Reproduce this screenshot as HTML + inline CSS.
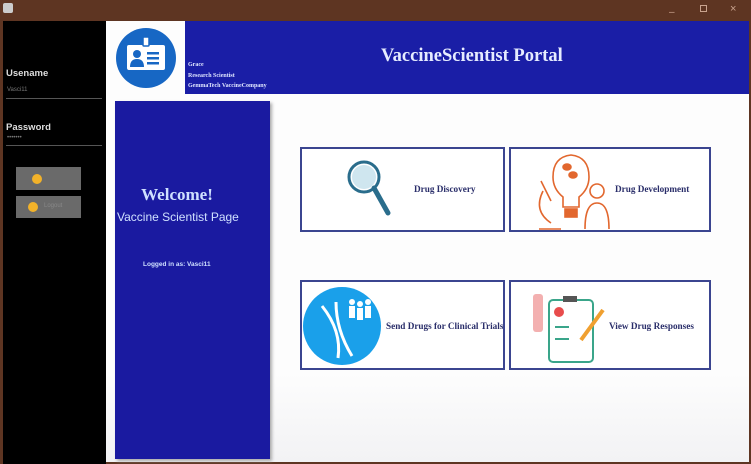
<!DOCTYPE html>
<html><head><meta charset="utf-8"><style>
*{margin:0;padding:0;box-sizing:border-box}
body{width:751px;height:464px;overflow:hidden;background:#5e3522;position:relative;font-family:"Liberation Sans",sans-serif}
.abs{position:absolute}
.serif{font-family:"Liberation Serif",serif;font-weight:bold}
.card{position:absolute;border:2px solid #3b4590;background:#fff;overflow:hidden}
.card span{position:absolute;font-family:"Liberation Serif",serif;font-weight:bold;font-size:9.2px;color:#2a2e6a;white-space:nowrap}
</style></head><body>
<div class="abs" style="left:3px;top:3px;width:10px;height:10px;background:#ccc;border-radius:2px"></div>
<div class="abs" style="left:669px;top:7px;color:#c9a38e;font-size:10px">–</div>
<div class="abs" style="left:700px;top:5px;width:7px;height:7px;border:1px solid #c9a38e"></div>
<div class="abs" style="left:730px;top:3px;color:#c9a38e;font-size:11px">×</div>
<div class="abs" style="left:3px;top:21px;width:103px;height:443px;background:#000"></div>
<div class="abs" style="left:6px;top:68px;color:#ddd;font-size:9.5px;font-weight:bold">Usename</div>
<div class="abs" style="left:7px;top:87px;color:#777;font-size:6px">Vasci11</div>
<div class="abs" style="left:6px;top:98px;width:96px;height:1px;background:#555"></div>
<div class="abs" style="left:6px;top:122px;color:#ddd;font-size:9.5px;font-weight:bold">Password</div>
<div class="abs" style="left:7px;top:135px;color:#777;font-size:6px">•••••••</div>
<div class="abs" style="left:6px;top:145px;width:96px;height:1px;background:#555"></div>
<div class="abs" style="left:16px;top:167px;width:65px;height:23px;background:#6a6a6a"></div>
<div class="abs" style="left:32px;top:174px;width:10px;height:10px;border-radius:50%;background:#f2b22a"></div>
<div class="abs" style="left:16px;top:196px;width:65px;height:22px;background:#6a6a6a"></div>
<div class="abs" style="left:28px;top:202px;width:10px;height:10px;border-radius:50%;background:#f2b22a"></div>
<div class="abs" style="left:44px;top:203px;color:#888;font-size:6px">Logout</div>
<div class="abs" style="left:106px;top:21px;width:643px;height:441px;background:linear-gradient(#fdfdfd 80%,#f2f2f4)"></div>
<div class="abs" style="left:185px;top:21px;width:564px;height:73px;background:#1a1ea6"></div>
<div class="abs serif" style="left:381px;top:46px;color:#e6ecff;font-size:18.5px">VaccineScientist Portal</div>
<div class="abs serif" style="left:188px;top:60px;color:#dfe6ff;font-size:6px;line-height:10.5px">Grace<br>Research Scientist<br>GemmaTech VaccineCompany</div>
<svg class="abs" style="left:115px;top:27px" width="62" height="62" viewBox="0 0 62 62">
<circle cx="31" cy="31" r="30" fill="#1767c4"/>
<rect x="12" y="18" width="38" height="25" rx="2" fill="#fff"/>
<rect x="28" y="10" width="6" height="9" rx="1" fill="#fff" stroke="#1767c4" stroke-width="1.5"/>
<circle cx="22" cy="27" r="4" fill="#1767c4"/>
<path d="M15 40 Q15 32 22 32 Q29 32 29 40Z" fill="#1767c4"/>
<rect x="32" y="25" width="12" height="2.5" fill="#1767c4"/><rect x="32" y="30" width="12" height="2.5" fill="#1767c4"/><rect x="32" y="35" width="12" height="2.5" fill="#1767c4"/>
</svg>
<div class="abs" style="left:115px;top:101px;width:155px;height:358px;background:#1a1aa0;box-shadow:2px 2px 3px #aaa"></div>
<div class="abs serif" style="left:115px;top:185px;width:124px;text-align:center;color:#cfe0ff;font-size:17px">Welcome!</div>
<div class="abs" style="left:117px;top:210px;color:#cfe0ff;font-size:12px">Vaccine Scientist Page</div>
<div class="abs" style="left:143px;top:261px;color:#cfe0ff;font-size:6.5px;font-weight:bold">Logged in as: Vasci11</div>
<div class="card" style="left:300px;top:147px;width:205px;height:85px">
<svg class="abs" style="left:42px;top:8px" width="50" height="60"><circle cx="20" cy="20" r="15" fill="none" stroke="#2a6d8c" stroke-width="3"/><circle cx="20" cy="20" r="12" fill="#cfe6ef"/><line x1="30" y1="31" x2="44" y2="56" stroke="#2a6d8c" stroke-width="5" stroke-linecap="round"/></svg>
<span style="left:112px;top:35px">Drug Discovery</span></div>
<div class="card" style="left:509px;top:147px;width:202px;height:85px">
<svg class="abs" style="left:20px;top:2px" width="80" height="80" fill="none" stroke="#e2672e" stroke-width="1.6"><path d="M40 4 Q22 6 22 26 Q22 38 32 46 L32 56 L48 56 L48 46 Q58 38 58 26 Q58 6 40 4Z"/><rect x="34" y="58" width="12" height="8" fill="#e2672e"/><ellipse cx="36" cy="16" rx="4" ry="3" fill="#e2672e"/><ellipse cx="42" cy="24" rx="4" ry="3" fill="#e2672e"/><path d="M8 78 L30 78 M12 40 Q2 60 20 72 M10 30 L20 50"/><circle cx="66" cy="40" r="7"/><path d="M54 78 Q54 52 66 52 Q78 52 78 78"/></svg>
<span style="left:104px;top:35px">Drug Development</span></div>
<div class="card" style="left:300px;top:280px;width:205px;height:90px">
<svg class="abs" style="left:0px;top:4px" width="82" height="80"><circle cx="40" cy="40" r="39" fill="#1aa0ea"/><path d="M20 20 Q40 45 36 72 M34 16 Q34 44 50 70" stroke="#fff" stroke-width="3" fill="none"/><g fill="#fff"><circle cx="50" cy="16" r="3"/><circle cx="58" cy="18" r="3"/><circle cx="66" cy="16" r="3"/><rect x="47" y="20" width="6" height="12"/><rect x="55" y="22" width="6" height="12"/><rect x="63" y="20" width="6" height="12"/></g></svg>
<span style="left:84px;top:39px">Send Drugs for Clinical Trials</span></div>
<div class="card" style="left:509px;top:280px;width:202px;height:90px">
<svg class="abs" style="left:20px;top:8px" width="80" height="80"><rect x="2" y="4" width="10" height="38" rx="3" fill="#f3b0b0"/><rect x="18" y="10" width="44" height="62" rx="4" fill="#fff" stroke="#3aa58a" stroke-width="2"/><rect x="32" y="6" width="14" height="6" fill="#555"/><circle cx="28" cy="22" r="5" fill="#e84c4c"/><rect x="24" y="36" width="14" height="2" fill="#3aa58a"/><rect x="24" y="48" width="14" height="2" fill="#3aa58a"/><path d="M50 50 L72 20" stroke="#f0a030" stroke-width="4"/></svg>
<span style="left:98px;top:39px">View Drug Responses</span></div>
</body></html>
